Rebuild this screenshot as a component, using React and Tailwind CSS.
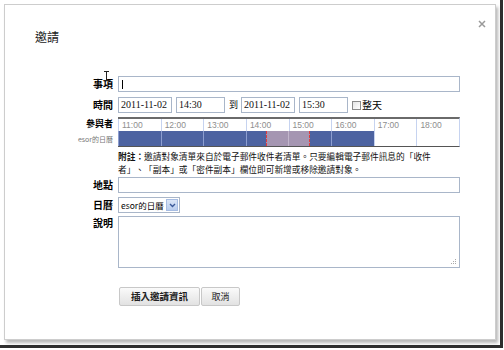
export default function App() {
  const hours = ["11:00", "12:00", "13:00", "14:00", "15:00", "16:00", "17:00", "18:00"];
  const cjk = "font-['Noto_Sans_CJK_TC','Noto_Sans_CJK_SC',sans-serif]";
  const inputBox = "h-[16px] border border-[#a9b6c9] bg-white";
  const serifVal = "font-['Liberation_Serif',serif] text-[10px] leading-[14px] pl-[2px] text-[#111]";
  return (
    <div className="w-[504px] h-[350px] bg-white overflow-hidden">
      <div className="w-[503px] h-[348px] border-r-[3px] border-b-[3px] border-[#2e2e2e] pl-[4px] pt-[4px] box-border">
        <div className={`relative w-[492px] h-[336px] border border-[#cdcdcd] bg-white shadow-[2px_3px_3px_rgba(0,0,0,0.28)] ${cjk} text-black`}>
          {/* close */}
          <svg className="absolute top-[15px] right-[9px]" width="8" height="8" viewBox="0 0 8 8">
            <path d="M1 1 L7 7 M7 1 L1 7" stroke="#9a9a9a" strokeWidth="1.5" />
          </svg>
          {/* mouse I-beam cursor */}
          <svg className="absolute left-[98px] top-[66px]" width="7" height="10" viewBox="0 0 7 10">
            <path d="M1 0.5 H6 M3.5 0.5 V9.5 M1 9.5 H6" stroke="#222" strokeWidth="1" fill="none" />
          </svg>

          <div className="pl-[30px] pt-[24px] text-[12px] leading-[16px] text-[#222]">邀請</div>

          <div className="mt-[31px]">
            {/* 事項 */}
            <div className="flex items-center h-[16px]">
              <div className="w-[108px] text-right text-[10px] font-bold leading-[16px]">事項</div>
              <div className={`ml-[5px] w-[342px] ${inputBox} flex items-center`}>
                <div className="ml-[3px] w-px h-[9px] bg-black" />
              </div>
            </div>

            {/* 時間 */}
            <div className="flex items-center h-[16px] mt-[5px]">
              <div className="w-[108px] text-right text-[10px] font-bold leading-[16px]">時間</div>
              <div className="ml-[5px] w-[342px] flex items-center">
                <div className={`w-[54px] ${inputBox} ${serifVal}`}>2011-11-02</div>
                <div className={`ml-[4px] w-[49px] ${inputBox} ${serifVal}`}>14:30</div>
                <div className="ml-[4px] w-[8px] text-[9px] leading-[16px]">到</div>
                <div className={`ml-[4px] w-[54px] ${inputBox} ${serifVal}`}>2011-11-02</div>
                <div className={`ml-[4px] w-[49px] ${inputBox} ${serifVal}`}>15:30</div>
                <div className="ml-[4px] w-[9px] h-[9px] border border-[#8a8a8a] bg-gradient-to-br from-[#e4e4e4] to-white" />
                <div className="ml-[1px] text-[10px] leading-[16px]">整天</div>
              </div>
            </div>

            {/* 參與者 */}
            <div className="flex mt-[4px]">
              <div className="w-[108px] flex flex-col items-end">
                <div className="h-[14px] text-[9px] font-bold leading-[14px]">參與者</div>
                <div className="h-[16px] text-[7px] text-[#777] leading-[16px]">esor的日曆</div>
              </div>
              <div className="ml-[5px] w-[342px] relative border-t-2 border-t-[#6a6a6a] border-b border-b-[#555] border-r border-r-[#c6d3f0]">
                <div className="grid grid-cols-8 h-[12px]">
                  {hours.map((h) => (
                    <div key={h} className="border-l border-[#c6d3f0] pl-[3px] text-[8.5px] leading-[12px] text-[#8e8e8e] font-['Liberation_Sans',sans-serif]">
                      {h}
                    </div>
                  ))}
                </div>
                <div className="grid grid-cols-8 h-[15px]">
                  {hours.map((h, i) => (
                    <div key={h} className={i < 6 ? "border-l border-[#8d9ed0] bg-[#4d63a1]" : "border-l border-[#c6d3f0] bg-white"} />
                  ))}
                </div>
                <div className="absolute left-[148px] top-[12px] w-[44px] h-[15px] bg-[#a596b2] border-l border-r border-dashed border-[#e23b3b]">
                  <div className="ml-[21px] w-px h-full bg-[#c2b6cc]" />
                </div>
              </div>
            </div>

            {/* note */}
            <div className="flex mt-[3px]">
              <div className="w-[108px]" />
              <div className="ml-[5px] w-[342px] text-[8.7px] leading-[13px] text-[#111] [text-spacing-trim:space-all]">
                <div className="whitespace-nowrap"><span className="font-bold">附註：</span>邀請對象清單來自於電子郵件收件者清單。只要編輯電子郵件訊息的「收件</div>
                <div className="whitespace-nowrap">者」、「副本」或「密件副本」欄位即可新增或移除邀請對象。</div>
              </div>
            </div>

            {/* 地點 */}
            <div className="flex items-center h-[16px] mt-[1px]">
              <div className="w-[108px] text-right text-[10px] font-bold leading-[16px]">地點</div>
              <div className={`ml-[5px] w-[342px] ${inputBox}`} />
            </div>

            {/* 日曆 */}
            <div className="flex items-center h-[16px] mt-[4px]">
              <div className="w-[108px] text-right text-[10px] font-bold leading-[16px]">日曆</div>
              <div className="ml-[5px] w-[62px] h-[16px] border border-[#a9b6c9] bg-white flex items-center justify-between">
                <span className="pl-[2px] text-[8.5px] leading-[14px]">esor的日曆</span>
                <span className="w-[12px] h-[12px] mr-[1px] bg-gradient-to-b from-[#dbe6f7] to-[#b9cdee] border border-[#a7bde3] flex items-center justify-center">
                  <svg width="7" height="5" viewBox="0 0 7 5">
                    <path d="M1 1 L3.5 3.5 L6 1" stroke="#3b5a9a" strokeWidth="1.4" fill="none" />
                  </svg>
                </span>
              </div>
            </div>

            {/* 說明 */}
            <div className="flex mt-[3px]">
              <div className="w-[108px] text-right text-[10px] font-bold leading-[14px]">說明</div>
              <div className="ml-[5px] w-[342px] h-[52px] border border-[#a9b6c9] bg-white relative">
                <svg className="absolute right-[2px] bottom-[2px]" width="6" height="6" viewBox="0 0 6 6">
                  <rect x="4" y="0" width="1" height="1" fill="#aaa" />
                  <rect x="2" y="2" width="1" height="1" fill="#aaa" />
                  <rect x="4" y="2" width="1" height="1" fill="#aaa" />
                  <rect x="0" y="4" width="1" height="1" fill="#aaa" />
                  <rect x="2" y="4" width="1" height="1" fill="#aaa" />
                  <rect x="4" y="4" width="1" height="1" fill="#aaa" />
                </svg>
              </div>
            </div>

            {/* buttons */}
            <div className="flex mt-[19px]">
              <div className="w-[108px]" />
              <div className="ml-[6px] flex gap-[1px]">
                <div className="w-[81px] h-[19px] border border-[#c8c8c8] rounded-[2px] bg-gradient-to-b from-[#fafafa] to-[#e2e2e2] text-[9.5px] font-bold leading-[17px] text-center text-[#222]">
                  插入邀請資訊
                </div>
                <div className="w-[39px] h-[19px] border border-[#c8c8c8] rounded-[2px] bg-gradient-to-b from-[#fafafa] to-[#e2e2e2] text-[9px] leading-[17px] text-center text-[#222]">
                  取消
                </div>
              </div>
            </div>
          </div>
        </div>
      </div>
    </div>
  );
}
